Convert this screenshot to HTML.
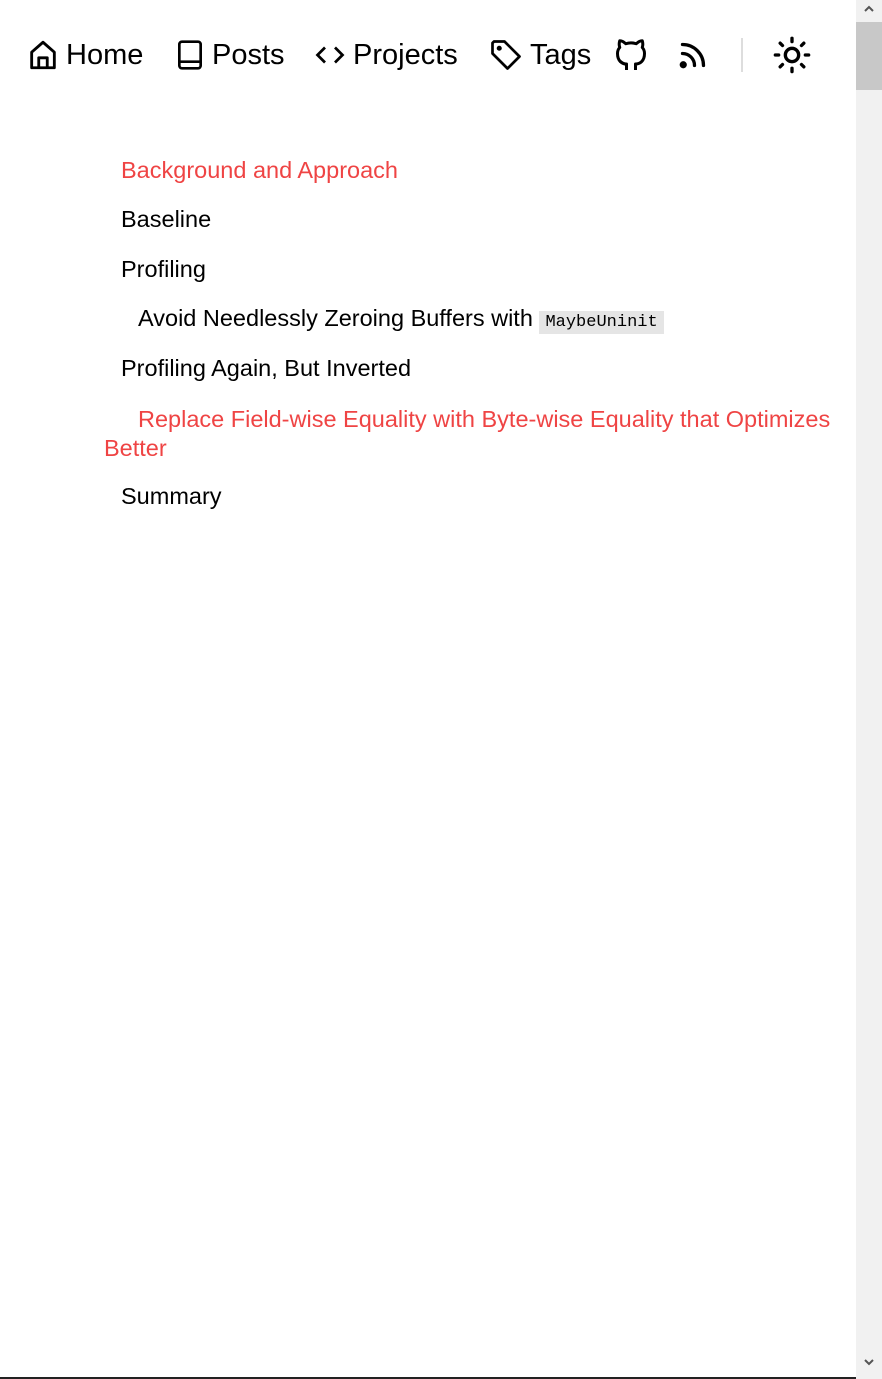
<!DOCTYPE html>
<html><head><meta charset="utf-8"><style>
html,body{margin:0;padding:0;}
body{width:882px;height:1379px;position:relative;overflow:hidden;background:#fff;font-family:"Liberation Sans",sans-serif;color:#000;}
.nav{position:absolute;top:30px;left:0;height:50px;}
.item{position:absolute;top:0;display:flex;align-items:center;height:50px;font-size:29px;white-space:nowrap;}
.item svg{margin-right:6px}
.toc{position:absolute;font-size:23.5px;white-space:nowrap;}
.red{color:#ef4444;}
code{font-family:"Liberation Mono",monospace;font-size:17px;background:#e5e5e5;padding:2px 6px;}
.sb{position:absolute;right:0;top:0;width:26px;height:1379px;background:#f1f1f1;}
.thumb{position:absolute;left:0;top:22px;width:26px;height:68px;background:#c8c8c8;}
</style></head><body>
<div class="nav">
<div class="item" style="left:26px"><svg width="34" height="34" viewBox="0 0 24 24" fill="none" stroke="#000" stroke-width="2" stroke-linejoin="round"><path d="M4 21V10l8-7 8 7v11z"/><path d="M9 21v-7h6v7"/></svg>Home</div>
<div class="item" style="left:174px"><svg width="32" height="34" viewBox="0 0 24 24" fill="none" stroke="#000" stroke-width="2" stroke-linejoin="round"><rect x="4" y="2" width="16" height="20" rx="2"/><path d="M4 17h16"/></svg>Posts</div>
<div class="item" style="left:313px"><svg width="34" height="30" viewBox="0 0 24 24" fill="none" stroke="#000" stroke-width="2.2"><path d="M8 6l-6 6 6 6M16 6l6 6-6 6"/></svg>Projects</div>
<div class="item" style="left:488px"><svg width="36" height="36" viewBox="0 0 24 24" fill="none" stroke="#000" stroke-width="1.8" stroke-linejoin="round"><path d="M3 4v7l10 10 8-8L11 3H4z"/><circle cx="7.5" cy="7.5" r="0.8" fill="#000"/></svg>Tags</div>
<div class="item" style="left:613px"><svg width="36" height="36" viewBox="0 0 24 24" fill="none" stroke="#000" stroke-width="2" stroke-linejoin="round"><path d="M9 22v-4c-3 0-6-2-6-7 0-1.5.5-3 1.5-4C4 5.5 4 4 4.5 2.5 6 2.5 7.5 3.5 8.5 4.5a11 11 0 0 1 7 0c1-1 2.5-2 4-2 .5 1.5.5 3 0 4.5 1 1 1.5 2.5 1.5 4 0 5-3 7-6 7v4"/><path d="M9 18c-3 .5-3-2-5-2"/></svg></div>
<div class="item" style="left:675px"><svg width="36" height="36" viewBox="0 0 24 24" fill="none" stroke="#000" stroke-width="2.2" stroke-linecap="round"><path d="M5 11a8 8 0 0 1 8 8M5 5a14 14 0 0 1 14 14"/><circle cx="5.5" cy="18.5" r="1.3" fill="#000"/></svg></div>
<div style="position:absolute;left:741px;top:8px;width:2px;height:34px;background:#ddd"></div>
<div class="item" style="left:772px"><svg width="40" height="40" viewBox="0 0 24 24" fill="none" stroke="#000" stroke-width="2" stroke-linecap="round"><circle cx="12" cy="12" r="4"/><path d="M12 2v2M12 20v2M2 12h2M20 12h2M4.9 4.9l1.4 1.4M17.7 17.7l1.4 1.4M4.9 19.1l1.4-1.4M17.7 6.3l1.4-1.4"/></svg></div>
</div>
<div class="toc red" style="left:121px;top:157px">Background and Approach</div>
<div class="toc" style="left:121px;top:206px">Baseline</div>
<div class="toc" style="left:121px;top:256px">Profiling</div>
<div class="toc" style="left:138px;top:305px">Avoid Needlessly Zeroing Buffers with <code>MaybeUninit</code></div>
<div class="toc" style="left:121px;top:355px">Profiling Again, But Inverted</div>
<div class="toc red" style="left:104px;top:405px;line-height:29px;white-space:normal;width:745px;text-indent:34px">Replace Field-wise Equality with Byte-wise Equality that Optimizes Better</div>
<div class="toc" style="left:121px;top:483px">Summary</div>
<div class="sb"><div class="thumb"></div>
<svg style="position:absolute;left:7px;top:4px" width="12" height="10" viewBox="0 0 12 10"><path d="M2 7l4-4 4 4" stroke="#555" stroke-width="2" fill="none"/></svg>
<svg style="position:absolute;left:7px;top:1357px" width="12" height="10" viewBox="0 0 12 10"><path d="M2 3l4 4 4-4" stroke="#555" stroke-width="2" fill="none"/></svg>
</div>
<div style="position:absolute;left:0;top:1377px;width:856px;height:2px;background:#222"></div>
</body></html>
